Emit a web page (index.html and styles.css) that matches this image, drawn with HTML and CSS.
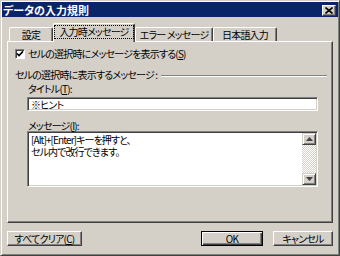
FILE: index.html
```html
<!DOCTYPE html>
<html lang="ja">
<head>
    <meta charset="UTF-8">
    <title>データの入力規則</title>
    <link rel="stylesheet" href="styles.css">
</head>
<body>
    <div class="window">
        <div class="titlebar">
            <span class="caption">データの入力規則</span>
            <span class="close">
                <svg width="8" height="7" viewBox="0 0 8 7"><path d="M0.5 0.5 L7.5 6.5 M7.5 0.5 L0.5 6.5" stroke="#000" stroke-width="1.6"/></svg>
            </span>
        </div>

        <div class="tabs">
            <div class="tab t1">設定</div>
            <div class="tab t2 active"><span class="focus">入力時メッセージ</span></div>
            <div class="tab t3">エラー&nbsp;メッセージ</div>
            <div class="tab t4">日本語入力</div>
        </div>

        <div class="panel">
            <div class="check">
                <span class="box">
                    <svg width="8" height="8" viewBox="0 0 8 8"><path d="M1 3.5 L3 5.6 L7 1.4" fill="none" stroke="#000" stroke-width="1.6"/></svg>
                </span>
                <span>セルの選択時にメッセージを表示する(<u>S</u>)</span>
            </div>

            <div class="group">
                <span>セルの選択時に表示するメッセージ :</span>
                <i class="rule"></i>
            </div>

            <div class="label first">タイトル(<u>T</u>):</div>
            <div class="input">※ヒント</div>

            <div class="label">メッセージ(<u>I</u>):</div>
            <div class="textarea">
                <div class="text">
                    <div>[Alt]+[Enter]キーを押すと、</div>
                    <div>セル内で改行できます。</div>
                </div>
                <div class="scroll">
                    <span class="arrow">
                        <svg width="7" height="4" viewBox="0 0 7 4"><path d="M3.5 0 L7 4 L0 4 Z" fill="#404040"/></svg>
                    </span>
                    <span class="track"></span>
                    <span class="arrow">
                        <svg width="7" height="4" viewBox="0 0 7 4"><path d="M0 0 L7 0 L3.5 4 Z" fill="#404040"/></svg>
                    </span>
                </div>
            </div>
        </div>

        <div class="buttons">
            <div class="btn clear">すべてクリア(<u>C</u>)</div>
            <div class="spacer"></div>
            <div class="btn ok">OK</div>
            <div class="btn cancel">キャンセル</div>
        </div>
    </div>
</body>
</html>
```

FILE: styles.css
```css
html, body {
    margin: 0;
    width: 340px;
    height: 256px;
    overflow: hidden;
    background: #d4d0c8;
}

body {
    font-family: "Noto Sans CJK JP", "Noto Sans", sans-serif;
    font-size: 10px;
    line-height: 10px;
    letter-spacing: -0.8px;
    font-feature-settings: "palt";
    color: #000;
}

.window {
    box-sizing: border-box;
    width: 340px;
    height: 256px;
    padding: 1px;
    border: 1px solid;
    border-color: #d4d0c8 #404040 #404040 #d4d0c8;
    box-shadow: inset 1px 1px #fff, inset -1px -1px #808080;
}

/* title bar */
.titlebar {
    height: 15px;
    background: #0a246a;
    color: #fff;
    font-weight: bold;
    display: flex;
    align-items: center;
    justify-content: space-between;
    padding: 0 2px 0 1px;
}
.caption {
    font-size: 11px;
    letter-spacing: 0;
    padding-top: 1px;
}
.close {
    box-sizing: border-box;
    width: 14px;
    height: 11px;
    background: #d4d0c8;
    border: 1px solid;
    border-color: #fff #404040 #404040 #fff;
    box-shadow: inset -1px -1px #808080;
    display: flex;
    align-items: center;
    justify-content: center;
    margin-top: 1px;
}

/* tabs */
.tabs {
    display: flex;
    align-items: flex-end;
    height: 18px;
    margin: 6px 0 0 7px;
    position: relative;
    z-index: 1;
}
.tab {
    box-sizing: border-box;
    height: 14px;
    border: 1px solid;
    border-bottom: none;
    border-color: #fff #404040 #fff #fff;
    border-radius: 2px 2px 0 0;
    box-shadow: inset -1px 0 #808080;
    display: flex;
    align-items: center;
    justify-content: center;
    padding-top: 1px;
}
.t1 { width: 44px; }
.t2 { width: 82px; }
.t3 { width: 78px; }
.t4 { width: 64px; }
.tab.active {
    height: 19px;
    margin-bottom: -1px;
    background: #d4d0c8;
    padding-top: 0;
    padding-bottom: 3px;
}
.focus {
    outline: 1px dotted #000;
    outline-offset: 1px;
    padding: 0 3px;
}

/* panel */
.panel {
    box-sizing: border-box;
    height: 182px;
    margin: 0 5px 0 5px;
    border: 1px solid;
    border-color: #fff #404040 #404040 #fff;
    box-shadow: inset -1px -1px #808080;
    padding: 7px 0 0 7px;
}

.check {
    display: flex;
    align-items: center;
    height: 10px;
    gap: 3px;
}
.box {
    box-sizing: border-box;
    width: 10px;
    height: 10px;
    background: #fff;
    border: 1px solid;
    border-color: #808080 #fff #fff #808080;
    box-shadow: inset 1px 1px #404040;
    display: flex;
    align-items: center;
    justify-content: center;
}

.group {
    display: flex;
    align-items: center;
    margin-top: 11px;
    margin-right: 5px;
    height: 10px;
}
.rule {
    flex: 1;
    height: 1px;
    margin-left: 4px;
    margin-top: 1px;
    background: #808080;
    border-bottom: 1px solid #fff;
}

.label {
    margin: 10px 0 0 13px;
    height: 10px;
}
.label.first {
    margin-top: 4px;
}

.input, .textarea {
    box-sizing: border-box;
    margin-left: 12px;
    width: 291px;
    background: #fff;
    border: 1px solid;
    border-color: #808080 #fff #fff #808080;
    box-shadow: inset 1px 1px #404040, inset -1px -1px #d4d0c8;
}
.input {
    height: 14px;
    margin-top: 3px;
    padding: 2px 0 0 3px;
}
.textarea {
    height: 56px;
    display: flex;
    padding: 1px;
}
.text {
    flex: 1;
    padding: 1px 0 0 2px;
    line-height: 12px;
    letter-spacing: -0.9px;
}
.scroll {
    width: 14px;
    display: flex;
    flex-direction: column;
}
.arrow {
    box-sizing: border-box;
    height: 12px;
    background: #d4d0c8;
    border: 1px solid;
    border-color: #d4d0c8 #404040 #404040 #d4d0c8;
    box-shadow: inset 1px 1px #fff, inset -1px -1px #808080;
    display: flex;
    align-items: center;
    justify-content: center;
}
.track {
    flex: 1;
    background: repeating-conic-gradient(#fff 0 25%, #d4d0c8 0 50%) 0 0 / 2px 2px;
}

/* buttons */
.buttons {
    display: flex;
    margin: 8px 5px 0 5px;
    gap: 10px;
}
.spacer {
    flex: 1;
}
.btn {
    box-sizing: border-box;
    height: 15px;
    border: 1px solid;
    border-color: #fff #404040 #404040 #fff;
    box-shadow: inset -1px -1px #808080;
    display: flex;
    align-items: center;
    justify-content: center;
    padding-top: 1px;
}
.clear { width: 75px; }
.ok {
    width: 62px;
    border-color: #000;
    box-shadow: inset 1px 1px #fff, inset -1px -1px #404040, inset -2px -2px #808080;
}
.cancel { width: 60px; }
```
